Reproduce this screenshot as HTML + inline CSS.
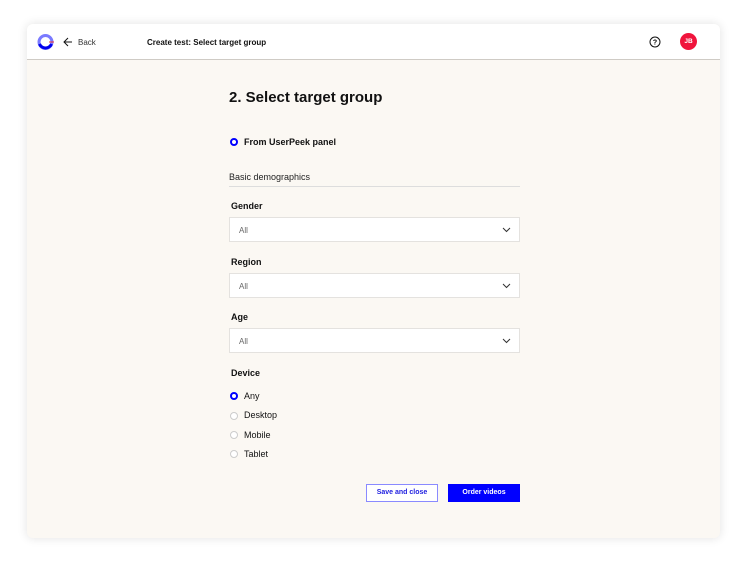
<!DOCTYPE html><html><head><style>
body{margin:0;width:751px;height:571px;background:#fff;font-family:"Liberation Sans",sans-serif;position:relative;overflow:hidden}
.card{position:absolute;left:27px;top:24px;width:693px;height:514px;background:#fbf8f3;border-radius:6px;box-shadow:0 0 10px rgba(0,0,0,.12);overflow:hidden}
.hd{height:35px;background:#fff;border-bottom:1px solid #cfcbc5;position:relative}
.a{position:absolute;font-size:8px;color:#111}
.lbl{position:absolute;left:231px;font-size:9px;font-weight:bold;color:#111}
.sel{position:absolute;left:229px;width:291px;height:25px;background:#fff;border:1px solid #e4e2df;box-sizing:border-box}
.sel span{position:absolute;left:9px;top:8px;font-size:8px;color:#666}
.sel svg{position:absolute;right:8px;top:9px}
.r{position:absolute;left:230px;width:8px;height:8px;border-radius:50%;border:1px solid #ccc;box-sizing:border-box;background:#fff}
.r.on{border:2.5px solid #0000ff}
.rt{position:absolute;left:244px;font-size:9px;color:#111}
</style></head><body>
<div class="card">
<div class="hd">
<svg style="position:absolute;left:10px;top:9px" width="18" height="18" viewBox="0 0 18 18"><circle cx="8.5" cy="9" r="6.5" fill="none" stroke="#7a7aff" stroke-width="3"/><path d="M2.5 11a6.5 6.5 0 0 0 12 0" fill="none" stroke="#0000ee" stroke-width="3"/><path d="M12 9h5" stroke="#e33" stroke-width="1"/></svg>
<svg style="position:absolute;left:36px;top:13px" width="10" height="10" viewBox="0 0 10 10"><path d="M9 5H1M5 1L1 5l4 4" fill="none" stroke="#111" stroke-width="1"/></svg>
<div class="a" style="left:51px;top:14px;color:#333">Back</div>
<div class="a" style="left:120px;top:14px;font-weight:bold">Create test: Select target group</div>
<svg style="position:absolute;left:622px;top:12px" width="12" height="12" viewBox="0 0 12 12"><circle cx="6" cy="6" r="5" fill="none" stroke="#111" stroke-width="1"/><text x="6" y="8.5" font-size="7" text-anchor="middle" font-family="Liberation Sans" font-weight="bold">?</text></svg>
<div style="position:absolute;left:653px;top:9px;width:17px;height:17px;border-radius:50%;background:#f0143c;color:#fff;font-size:6.5px;font-weight:bold;text-align:center;line-height:17px">JB</div>
</div>
</div>
<div style="position:absolute;left:229px;top:89px;font-size:15px;font-weight:bold;color:#111">2. Select target group</div>
<div class="r on" style="top:138px"></div><div class="rt" style="top:137px;font-weight:bold">From UserPeek panel</div>
<div style="position:absolute;left:229px;top:172px;font-size:9px;color:#222">Basic demographics</div>
<div style="position:absolute;left:229px;top:186px;width:291px;height:1px;background:#ddd"></div>
<div class="lbl" style="top:201px">Gender</div>
<div class="sel" style="top:217px"><span>All</span><svg width="9" height="6"><path d="M1 1l3.5 3.5L8 1" fill="none" stroke="#333"/></svg></div>
<div class="lbl" style="top:257px">Region</div>
<div class="sel" style="top:273px"><span>All</span><svg width="9" height="6"><path d="M1 1l3.5 3.5L8 1" fill="none" stroke="#333"/></svg></div>
<div class="lbl" style="top:312px">Age</div>
<div class="sel" style="top:328px"><span>All</span><svg width="9" height="6"><path d="M1 1l3.5 3.5L8 1" fill="none" stroke="#333"/></svg></div>
<div class="lbl" style="top:368px">Device</div>
<div class="r on" style="top:392px"></div><div class="rt" style="top:391px">Any</div>
<div class="r" style="top:412px"></div><div class="rt" style="top:410px">Desktop</div>
<div class="r" style="top:431px"></div><div class="rt" style="top:430px">Mobile</div>
<div class="r" style="top:450px"></div><div class="rt" style="top:449px">Tablet</div>
<div style="position:absolute;left:366px;top:484px;width:72px;height:18px;border:1px solid #8a8aff;box-sizing:border-box;background:#fff;color:#2020e0;font-size:7px;font-weight:bold;text-align:center;line-height:16px">Save and close</div>
<div style="position:absolute;left:448px;top:484px;width:72px;height:18px;background:#0000ff;color:#fff;font-size:7px;font-weight:bold;text-align:center;line-height:18px">Order videos</div>
</body></html>
